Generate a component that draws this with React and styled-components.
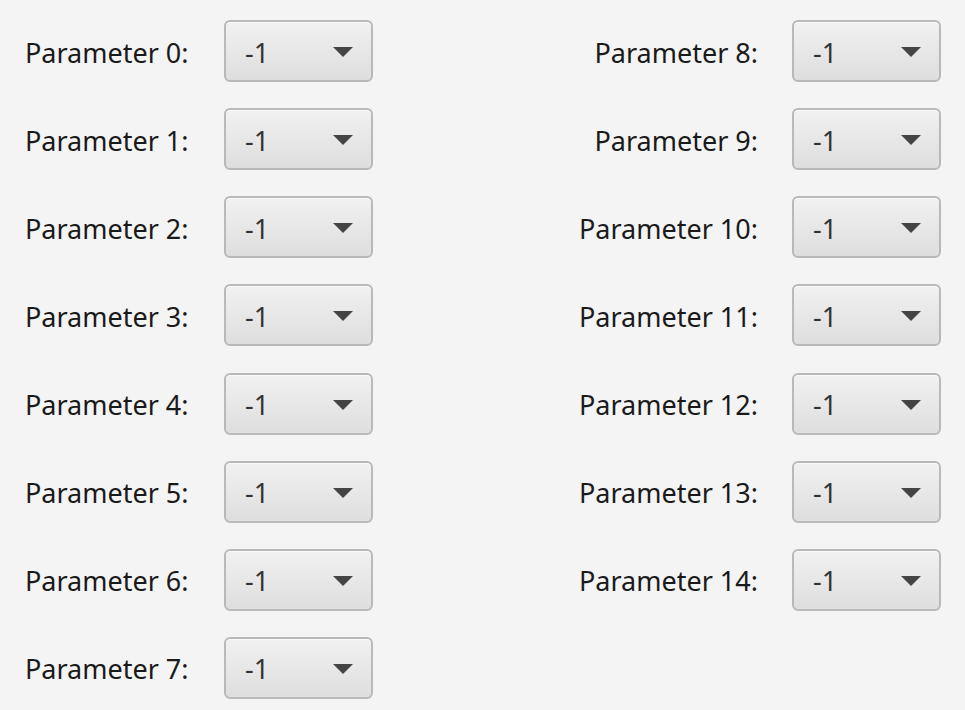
import React from "react";
import styled, { createGlobalStyle } from "styled-components";

const Global = createGlobalStyle`
  html, body { margin: 0; padding: 0; background: #f4f4f4; }
  body { font-family: "Noto Sans", "Open Sans", sans-serif; }
`;

const Page = styled.div`
  width: 965px;
  height: 710px;
  box-sizing: border-box;
  padding: 20px 24px 0 25px;
  display: grid;
  grid-template-columns: 199px 149px 419px 149px;
  grid-auto-rows: 62px;
  row-gap: 26.15px;
  align-items: center;
  background: #f4f4f4;
  overflow: hidden;
`;

const Label = styled.div`
  font-size: 27px;
  line-height: 1;
  color: #1a1a1a;
  white-space: nowrap;
  grid-column: ${(p) => (p.$right ? 3 : 1)};
  grid-row: ${(p) => p.$row};
  justify-self: ${(p) => (p.$right ? "end" : "start")};
  padding-right: ${(p) => (p.$right ? "34px" : "0")};
  margin-top: 2px;
`;

const Combo = styled.div`
  grid-column: ${(p) => (p.$right ? 4 : 2)};
  grid-row: ${(p) => p.$row};
  height: 62px;
  box-sizing: border-box;
  border: 2px solid #b9b9b9;
  border-radius: 6px;
  background: linear-gradient(#f1f1f1, #dedede);
  box-shadow: inset 0 1px 0 #fbfbfb;
  display: flex;
  align-items: center;
  justify-content: space-between;
  padding: 0 18px 0 19px;
`;

const Value = styled.span`
  font-size: 27px;
  line-height: 1;
  color: #333;
  margin-top: 2px;
`;

const Arrow = styled.span`
  width: 0;
  height: 0;
  border-left: 10px solid transparent;
  border-right: 10px solid transparent;
  border-top: 10px solid #444;
  margin-top: 2px;
`;

const Field = ({ label, row, right }) => (
  <>
    <Label $row={row} $right={right}>{label}</Label>
    <Combo $row={row} $right={right}>
      <Value>-1</Value>
      <Arrow />
    </Combo>
  </>
);

export default function App() {
  const left = Array.from({ length: 8 }, (_, i) => i);
  const right = Array.from({ length: 7 }, (_, i) => i + 8);
  return (
    <>
      <Global />
      <Page>
        {left.map((i) => (
          <Field key={i} label={`Parameter ${i}:`} row={i + 1} />
        ))}
        {right.map((i) => (
          <Field key={i} label={`Parameter ${i}:`} row={i - 7} right />
        ))}
      </Page>
    </>
  );
}
